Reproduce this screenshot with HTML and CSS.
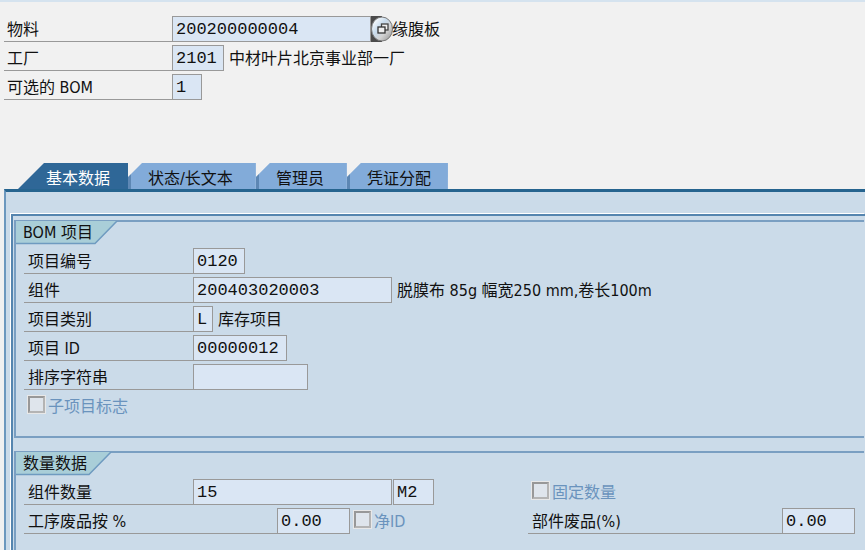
FILE: index.html
```html
<!DOCTYPE html>
<html lang="zh-CN">
<head>
<meta charset="utf-8">
<meta name="viewport" content="width=device-width, initial-scale=1">
<title>BOM 项目</title>
<link rel="stylesheet" href="styles.css">
</head>
<body>
<form class="page">
  <header class="head">
    <div class="row">
      <label class="label" for="material">物料</label>
      <input class="field w-200" id="material" value="200200000004">
      <button class="match" type="button" aria-label="搜索帮助">
        <svg viewBox="0 0 22 26" width="22" height="26">
          <defs>
            <linearGradient id="ball" x1="0" y1="0" x2="1" y2="1">
              <stop offset="0.1" stop-color="#ffffff"/>
              <stop offset="0.4" stop-color="#c9dced"/>
              <stop offset="0.65" stop-color="#d2d2d2"/>
              <stop offset="1" stop-color="#8b8b8b"/>
            </linearGradient>
          </defs>
          <path d="M0 0H11V26H0Z" fill="#4b4b4b"/>
          <ellipse cx="11" cy="13" rx="10.5" ry="12" fill="url(#ball)" stroke="#777" stroke-width="1"/>
          <rect x="10.5" y="8" width="6.500" height="6" fill="#eee" stroke="#444" stroke-width="1.300"/>
          <rect x="7" y="11" width="7" height="6" fill="#eee" stroke="#333" stroke-width="1.300"/>
        </svg>
      </button>
      <span>缘腹板</span>
    </div>
    <div class="row">
      <label class="label" for="plant">工厂</label>
      <input class="field w-52" id="plant" value="2101">
      <span class="note">中材叶片北京事业部一厂</span>
    </div>
    <div class="row">
      <label class="label" for="alt">可选的 BOM</label>
      <input class="field w-30" id="alt" value="1">
    </div>
  </header>

  <nav class="tabs" role="tablist">
    <button class="tab tab-active" type="button" role="tab" aria-selected="true">基本数据</button>
    <button class="tab" type="button" role="tab">状态/长文本</button>
    <button class="tab" type="button" role="tab">管理员</button>
    <button class="tab" type="button" role="tab">凭证分配</button>
  </nav>

  <main class="panel">
    <div class="frame">
      <section class="group">
        <h2 class="title">
          <svg class="title-bg" viewBox="0 0 102 24" width="102" height="24" aria-hidden="true"><path d="M0 0H101L79 22.500H0Z" fill="#a9ced8"/><path d="M101 0L79 22.500H0" fill="none" stroke="#6f9bc0" stroke-width="1.500"/></svg>
          <span class="title-text">BOM 项目</span>
        </h2>
        <div class="rows">
          <div class="row">
            <label class="label" for="item">项目编号</label>
            <input class="field w-52" id="item" value="0120">
          </div>
          <div class="row">
            <label class="label" for="component">组件</label>
            <input class="field w-200" id="component" value="200403020003">
            <span class="note">脱膜布 85g 幅宽250 mm,卷长100m</span>
          </div>
          <div class="row">
            <label class="label" for="category">项目类别</label>
            <input class="field w-20" id="category" value="L">
            <span class="note">库存项目</span>
          </div>
          <div class="row">
            <label class="label" for="itemid">项目 ID</label>
            <input class="field w-94" id="itemid" value="00000012">
          </div>
          <div class="row">
            <label class="label" for="sort">排序字符串</label>
            <input class="field w-115" id="sort" value="">
          </div>
          <div class="row">
            <label class="check"><input class="box" type="checkbox" disabled>子项目标志</label>
          </div>
        </div>
      </section>

      <section class="group group-last">
        <h2 class="title">
          <svg class="title-bg" viewBox="0 0 102 24" width="102" height="24" aria-hidden="true"><path d="M0 0H95L73 22.500H0Z" fill="#a9ced8"/><path d="M95 0L73 22.500H0" fill="none" stroke="#6f9bc0" stroke-width="1.500"/></svg>
          <span class="title-text">数量数据</span>
        </h2>
        <div class="columns">
          <div class="rows">
            <div class="row">
              <label class="label" for="qty">组件数量</label>
              <input class="field w-200" id="qty" value="15">
              <input class="field w-41" aria-label="单位" value="M2">
            </div>
            <div class="row">
              <label class="label label-wide" for="opscrap">工序废品按 %</label>
              <input class="field w-73" id="opscrap" value="0.00">
              <label class="check"><input class="box" type="checkbox" disabled>净ID</label>
            </div>
          </div>
          <div class="rows">
            <div class="row">
              <label class="check"><input class="box" type="checkbox" disabled>固定数量</label>
            </div>
            <div class="row">
              <label class="label label-fill" for="compscrap">部件废品(%)</label>
              <input class="field w-73" id="compscrap" value="0.00">
            </div>
          </div>
        </div>
      </section>
    </div>
  </main>
</form>
</body>
</html>
```
FILE: styles.css
```css
* {
  box-sizing: border-box;
}

body {
  margin: 0;
  background: #f1f1f1;
  color: #111;
  font: 16px/24px "DejaVu Sans Condensed", "Noto Sans CJK SC", sans-serif;
}

input,
button {
  margin: 0;
  font: inherit;
  color: inherit;
}

.page {
  display: flex;
  flex-direction: column;
  height: 100vh;
  overflow: hidden;
  border-top: 2px solid #d5e3ef;
}

.head {
  display: flex;
  flex-direction: column;
  gap: 3px;
  padding: 14px 0 0 4px;
}

.row {
  display: flex;
  height: 26px;
  white-space: nowrap;
}

.label {
  flex: none;
  width: 168px;
  padding: 2px 0 0 3px;
  border-bottom: 1px solid #999;
}

.field {
  flex: none;
  height: 26px;
  padding: 0 3px;
  border: 1px solid #999;
  border-radius: 0;
  background: #dae6f4;
  font: 17px/24px "Liberation Mono", monospace;
  outline: 0;
}

.w-20 { width: 20px; }
.w-30 { width: 30px; }
.w-41 { width: 41px; }
.w-52 { width: 52px; }
.w-73 { width: 73px; }
.w-94 { width: 94px; }
.w-115 { width: 115px; }
.w-200 { width: 199px; }

.match {
  flex: none;
  width: 21px;
  height: 26px;
  padding: 0;
  border: 0;
  background: none;
}

.match svg {
  display: block;
}

.row > span {
  padding-top: 2px;
}

.note {
  padding-left: 5px;
}

.tabs {
  display: flex;
  flex: none;
  margin-top: 63px;
  padding-left: 18px;
}

.tab {
  height: 26px;
  padding: 4px 23px 0 20px;
  border: 0;
  background: linear-gradient(to right, #5d87b4 3px, #82abd9 3px);
  clip-path: polygon(14px 0, 100% 0, 100% 100%, 0 100%, 0 14px);
  white-space: nowrap;
}

.tab:last-child {
  padding-right: 17px;
}

.tab-active {
  padding: 4px 18px 0 28px;
  background: #2f6797;
  color: #fff;
  clip-path: polygon(26px 0, 100% 0, 100% 100%, 0 100%);
}

.panel {
  display: flex;
  flex: 1;
  margin-left: 4px;
  padding: 22px 0 0 5px;
  border-top: 3px solid #26648f;
  border-left: 2px solid #6c98be;
  background: #cbdbe9;
}

.frame {
  display: flex;
  flex: 1;
  flex-direction: column;
  gap: 13px;
  padding: 4px 1px 0 1px;
  border-top: 2px solid #5585af;
  border-left: 2px solid #5585af;
  box-shadow: -1px -1px #fff;
}

.group {
  border: 2px solid #7a9fc2;
  border-right: 0;
  padding-bottom: 17px;
}

.group-last {
  flex: 1;
  border-bottom: 0;
}

.title {
  position: relative;
  height: 22px;
  margin: 0;
  font-size: 16px;
  font-weight: 400;
  line-height: 22px;
}

.title-bg {
  position: absolute;
  top: -1px;
  left: 0;
}

.title-text {
  position: relative;
  padding-left: 7px;
}

.rows {
  display: flex;
  flex-direction: column;
  gap: 3px;
  min-width: 0;
  padding: 4px 0 0 8px;
}

.rows .label {
  width: 169px;
  padding-left: 4px;
}

.rows .label-wide {
  width: 253px;
}

.rows .label-fill {
  flex: 1;
}

.field + .field {
  margin-left: 1px;
}

.columns {
  display: grid;
  grid-template-columns: 504px 1fr;
}

.columns .rows + .rows {
  padding-right: 9px;
}

.check {
  display: flex;
  gap: 3px;
  padding: 2px 0 0 4px;
  color: #6a93bd;
}

.box {
  appearance: none;
  width: 17px;
  height: 17px;
  margin-top: 1px;
  border: 2px solid;
  border-color: #989898 #b4b4b4 #b4b4b4 #989898;
  outline: 1px solid #e8e8e8;
  outline-offset: 0;
  background: #dfe5ec;
}
```
